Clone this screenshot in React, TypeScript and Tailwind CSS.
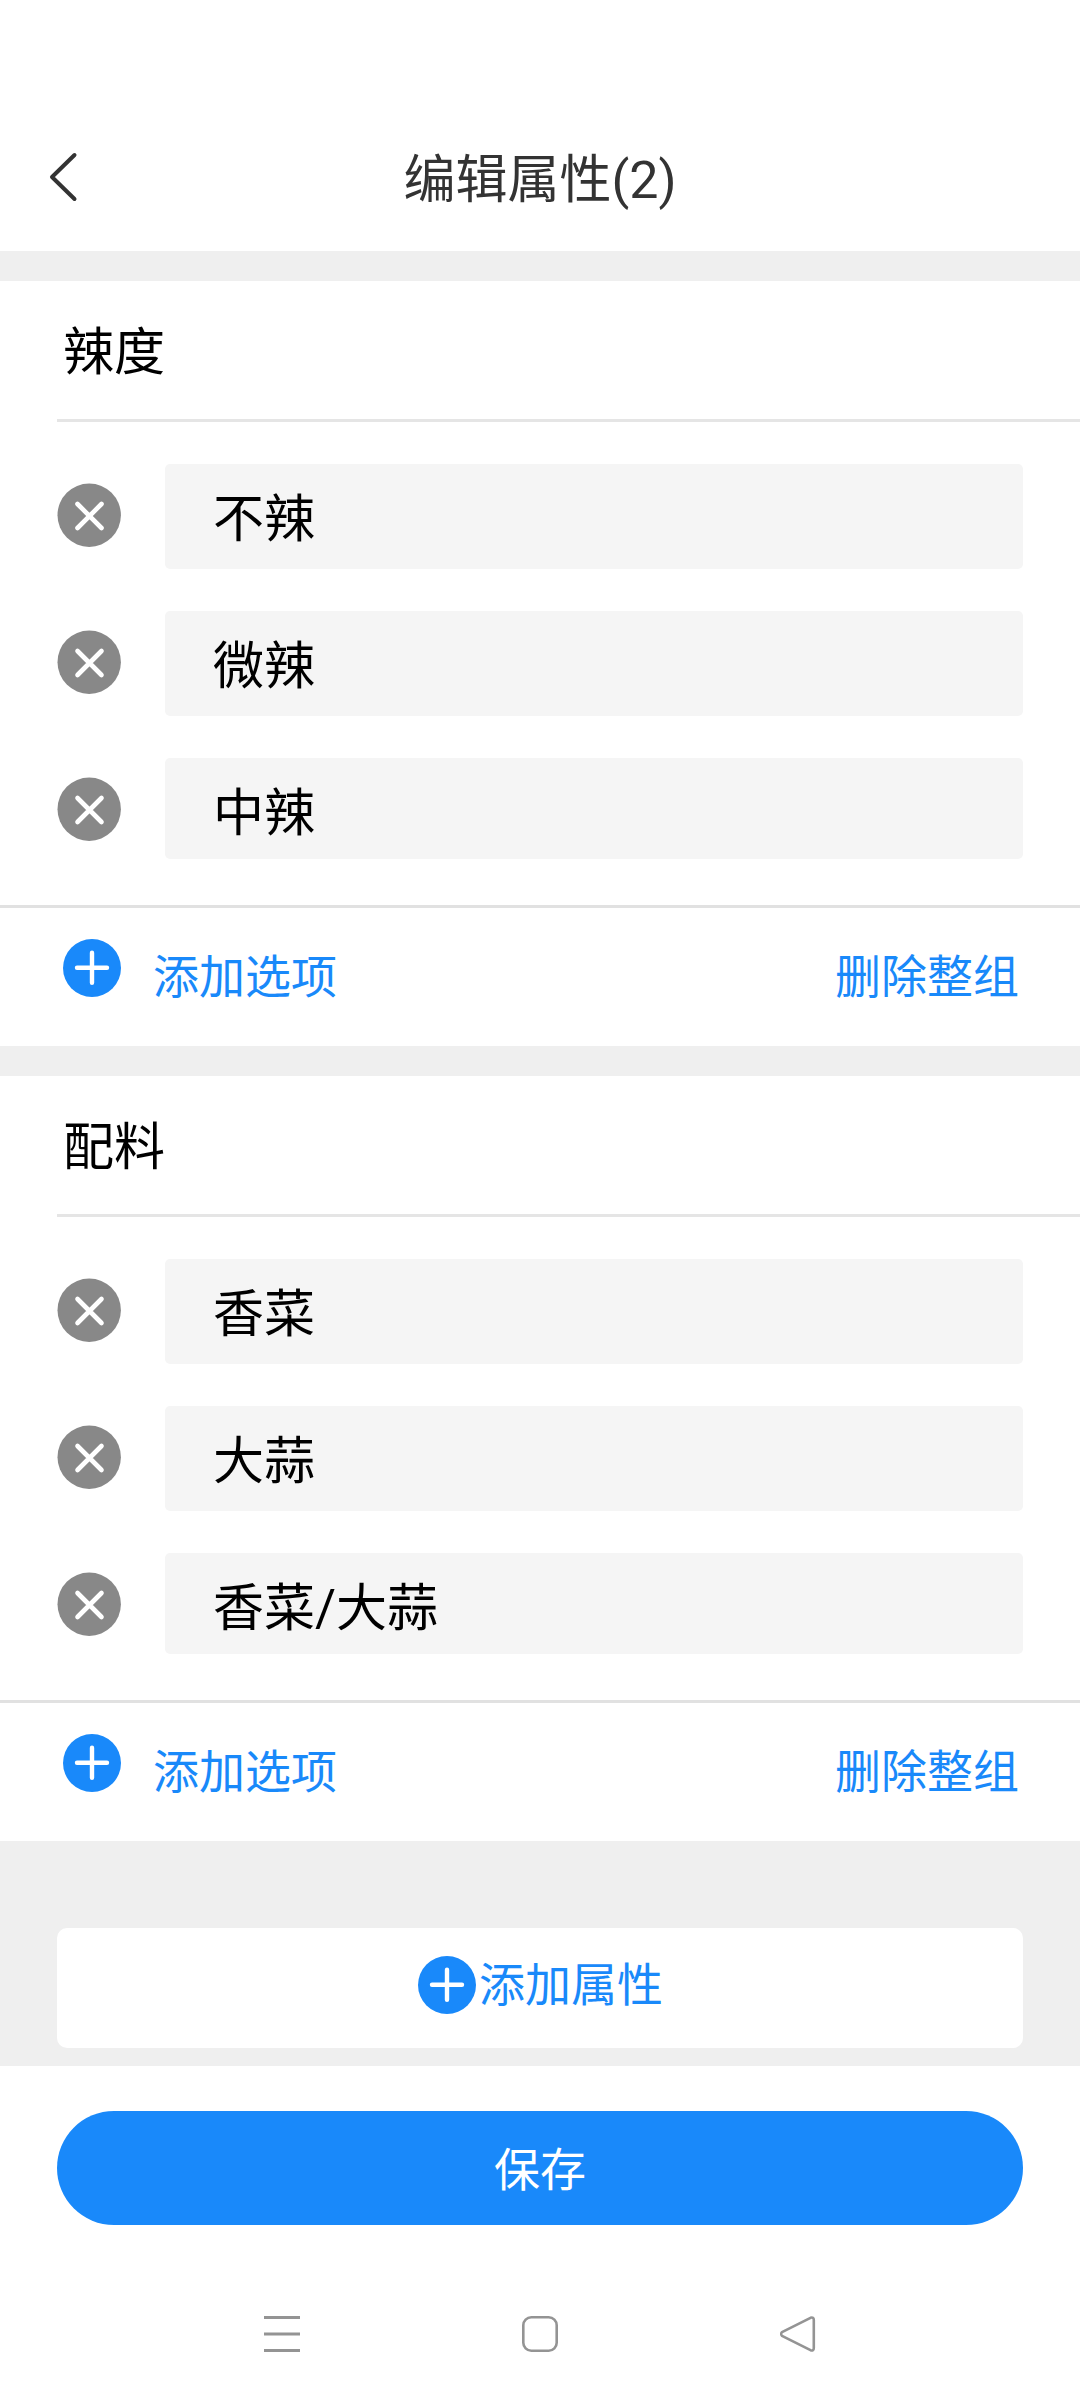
import { useState } from "react";

type Group = { name: string; options: string[] };

const initialGroups: Group[] = [
  { name: "辣度", options: ["不辣", "微辣", "中辣"] },
  { name: "配料", options: ["香菜", "大蒜", "香菜/大蒜"] },
];

function RemoveIcon() {
  return (
    <svg className="size-16 shrink-0" viewBox="0 0 64 64" fill="none">
      <circle cx="32.2" cy="32.2" r="31.7" fill="#888888" />
      <path d="M20.5 21L44.5 45M44.5 21L20.5 45" stroke="#fff" strokeWidth="4.6" strokeLinecap="round" />
    </svg>
  );
}

function PlusIcon() {
  return (
    <svg className="size-[58px] shrink-0" viewBox="0 0 58 58" fill="none">
      <circle cx="29" cy="29" r="29" fill="#1989fa" />
      <path d="M14 28.8H44M29 13.8V43.8" stroke="#fff" strokeWidth="4.4" strokeLinecap="round" />
    </svg>
  );
}

export default function App() {
  const [groups, setGroups] = useState(initialGroups);

  const removeGroup = (index: number) => {
    setGroups(groups.filter((_, i) => i !== index));
  };

  const removeOption = (index: number, option: number) => {
    setGroups(
      groups.map((g, i) => (i === index ? { ...g, options: g.options.filter((_, o) => o !== option) } : g))
    );
  };

  const addOption = (index: number) => {
    setGroups(groups.map((g, i) => (i === index ? { ...g, options: [...g.options, ""] } : g)));
  };

  return (
    <div className="flex min-h-[2400px] w-[1080px] flex-col bg-white font-[Roboto,'Noto_Sans_CJK_SC',sans-serif] text-black">
      {/* Header */}
      <header className="grid h-[251px] grid-cols-[120px_1fr_120px] items-center pt-[107px]">
        <button className="pb-[4px] pl-[47px]">
          <svg className="block h-[50px] w-[32px]" viewBox="0 0 32 50" fill="none">
            <path d="M27.5 3L5 25L27.5 47" stroke="#333" strokeWidth="4" strokeLinecap="round" strokeLinejoin="round" />
          </svg>
        </button>
        <h1 className="pt-[4px] text-center text-[52px] leading-[60px] text-[#333]">编辑属性({groups.length})</h1>
      </header>

      <main className="bg-[#efefef] pt-[30px] pb-[18px]">
        <div className="flex flex-col gap-[30px]">
          {groups.map((group, index) => (
            <section key={index} className="bg-white">
              <div className="ml-[57px] flex h-[141px] items-center border-b-3 border-[#e5e5e5] pt-[5px] pl-[6px]">
                <h2 className="text-[51px] leading-[60px]">{group.name}</h2>
              </div>

              <ul className="flex flex-col gap-[42px] pt-[42px] pr-[57px] pb-[46px] pl-[57px]">
                {group.options.map((option, o) => (
                  <li key={o} className="flex h-[105px] gap-[44px] last:h-[101px]">
                    <button className="h-16 pt-[19px]" onClick={() => removeOption(index, o)}>
                      <RemoveIcon />
                    </button>
                    <div className="flex-1 rounded-[5px] bg-[#f5f5f5] pt-[26px] pl-[48px] text-[51px] leading-[60px]">
                      {option}
                    </div>
                  </li>
                ))}
              </ul>

              <div className="flex h-[141px] justify-between border-t-3 border-[#e1e1e1] pr-[61px] pl-[63px] text-[46px] leading-[60px] text-[#1989fa]">
                <button className="flex gap-[32px] pt-[31px]" onClick={() => addOption(index)}>
                  <PlusIcon />
                  <span className="pt-[8px]">添加选项</span>
                </button>
                <button className="flex pt-[39px]" onClick={() => removeGroup(index)}>
                  删除整组
                </button>
              </div>
            </section>
          ))}
        </div>

        <button
          className="mx-[57px] mt-[87px] flex h-[120px] w-[966px] items-center justify-center gap-[3px] rounded-[10px] bg-white pb-[6px] pl-px text-[46px] leading-[60px] text-[#1989fa]"
          onClick={() => setGroups([...groups, { name: "", options: [""] }])}
        >
          <PlusIcon />
          <span>添加属性</span>
        </button>
      </main>

      <div className="px-[57px] pt-[45px]">
        <button className="flex h-[114px] w-full items-center justify-center rounded-full bg-[#1989fa] pt-[4px] text-[46px] leading-[60px] text-white">
          保存
        </button>
      </div>

      {/* System navigation bar */}
      <nav className="mt-auto flex h-[132px] items-center justify-between px-[264px]">
        <svg className="size-9" viewBox="0 0 36 36" stroke="#949494" strokeWidth="3" fill="none">
          <path d="M0 1.5H36M0 18H36M0 34.5H36" />
        </svg>
        <svg className="size-9" viewBox="0 0 36 36" stroke="#949494" strokeWidth="2.6" fill="none">
          <rect x="1.3" y="1.3" width="33.4" height="33.4" rx="8" />
        </svg>
        <svg className="size-9" viewBox="0 0 36 36" stroke="#949494" strokeWidth="2.6" strokeLinejoin="round" fill="none">
          <path d="M2 16.2L30.5 1.8Q33.8 0.8 33.8 4V32Q33.8 35.2 30.5 34.2L2 19.8Q0.2 18 2 16.2Z" />
        </svg>
      </nav>
    </div>
  );
}
